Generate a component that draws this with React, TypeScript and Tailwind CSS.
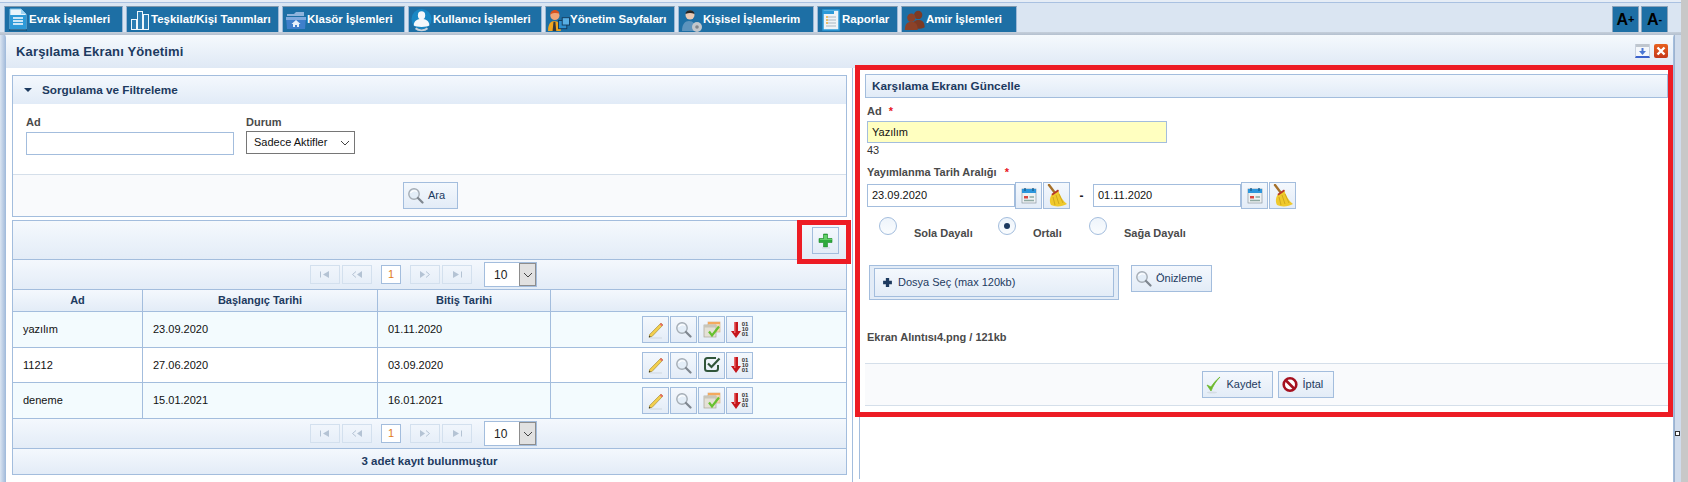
import type { ReactNode } from "react";

const font = { fontFamily: '"Liberation Sans", Arial, sans-serif' };

/* ---------- small drawn icons ---------- */

const EvrakIcon = () => (
  <svg width="22" height="24" viewBox="0 0 22 24">
    <path d="M3 1h11l5 5v16H3z" fill="#e8f4fb" stroke="#7fc4ea" />
    <path d="M14 1v5h5z" fill="#9ed4f2" />
    <rect x="3" y="7" width="16" height="14" fill="#2d9ad8" />
    <path d="M6 10h10M6 13h10M6 16h10" stroke="#fff" strokeWidth="1.6" />
    <path d="M2 22h18" stroke="#0f4f78" strokeWidth="1.5" />
  </svg>
);

const BarsIcon = () => (
  <svg width="22" height="24" viewBox="0 0 22 24">
    <g fill="#2b7db3" stroke="#eef6fb" strokeWidth="1">
      <rect x="2.500" y="11.500" width="5" height="10" />
      <rect x="8.500" y="3.500" width="5" height="18" />
      <rect x="14.500" y="6.500" width="5" height="15" />
    </g>
  </svg>
);

const FolderIcon = () => (
  <svg width="22" height="24" viewBox="0 0 22 24">
    <path d="M2 6h7l2-2h8v4H2z" fill="#8fb4dc" />
    <path d="M1 9h20l-1 12H2z" fill="#3f7fcb" />
    <path d="M1 9h20v3H1z" fill="#7fa9dd" />
    <path d="M11 12l-4.500 4h1.500v3h2v-2h2v2h2v-3h1.500z" fill="#e8f1fb" />
  </svg>
);

const UserIcon = () => (
  <svg width="24" height="24" viewBox="0 0 24 24">
    <circle cx="11.500" cy="11" r="11" fill="#1a87c4" />
    <ellipse cx="11.500" cy="7" rx="4" ry="4.500" fill="#f5f8fb" />
    <path d="M3 18c0-5 4-7 8.500-7S20 13 20 18c-2 2-15 2-17 0z" fill="#f5f8fb" />
    <path d="M5 21c3 3 10 3 13 0" stroke="#c9d3dc" strokeWidth="2" fill="none" />
  </svg>
);

const ManagerIcon = () => (
  <svg width="24" height="24" viewBox="0 0 24 24">
    <path d="M0 24c0-8 3-11 7-11s7 3 7 11z" fill="#f0a51e" />
    <path d="M6 14h2l1 10H5z" fill="#33373d" />
    <circle cx="7.500" cy="7" r="5" fill="#f2a477" />
    <path d="M2.500 6c0-6 9-7 10-1-3-1-7-1-10 1z" fill="#d9521f" />
    <rect x="11.500" y="12.500" width="9" height="9" fill="#2f8fce" stroke="#12385a" />
    <rect x="15.500" y="9.500" width="8" height="8" fill="#58aee3" stroke="#12385a" />
  </svg>
);

const PersonGearIcon = () => (
  <svg width="22" height="24" viewBox="0 0 22 24">
    <path d="M1 23c0-7 3-10 7-10s7 3 7 10z" fill="#5c93bd" />
    <circle cx="9" cy="7" r="4.500" fill="#e9c9b4" />
    <path d="M4.500 6c0-5 9-5 9 0-3-1.500-6-1.500-9 0z" fill="#262626" />
    <circle cx="16" cy="19" r="5" fill="#c2c7cc" />
    <circle cx="16" cy="19" r="1.800" fill="#80868c" />
  </svg>
);

const ReportIcon = () => (
  <svg width="22" height="24" viewBox="0 0 22 24">
    <rect x="3" y="2" width="16" height="20" fill="#eef3f7" stroke="#2b9ad9" strokeWidth="1.500" />
    <path d="M3 3h11v3H3z" fill="#2b9ad9" />
    <path d="M6 9h10M6 12h10M6 15h10M6 18h10" stroke="#a9b7c2" />
    <path d="M6 9h2M6 12h2M6 15h2" stroke="#f2b441" strokeWidth="1.500" />
  </svg>
);

const PeopleIcon = () => (
  <svg width="24" height="24" viewBox="0 0 24 24" fill="#7c3a24">
    <circle cx="15.500" cy="6.500" r="4.500" />
    <path d="M9 21c0-7 2.500-9 6.500-9s7 2 7 8c-3 2-10 2-13.500 1z" />
    <circle cx="8" cy="9.500" r="4.500" fill="#8c4229" />
    <path d="M1 23c0-7 3-9 7-9s7 2 7 9z" fill="#8c4229" />
  </svg>
);

const Magnifier = () => (
  <svg width="17" height="17" viewBox="0 0 17 17">
    <circle cx="7" cy="7" r="5.200" fill="#e4eef8" stroke="#a5adb5" strokeWidth="1.400" />
    <path d="M3.500 6c1-2 4-3 6.500-1.500" stroke="#fff" strokeWidth="1.200" fill="none" />
    <path d="M11 11l4.500 4.500" stroke="#7f8790" strokeWidth="2.200" strokeLinecap="round" />
  </svg>
);

const Pencil = () => (
  <svg width="18" height="18" viewBox="0 0 18 18">
    <path d="M14 2l2 2L5 15.500l-3 .8.800-3z" fill="#f3cf4d" stroke="#9a8330" strokeWidth=".6" />
    <path d="M14 2l2 2-1.300 1.300-2-2z" fill="#e9686a" />
    <path d="M2 16.300l.4-1.700 1.300 1.300z" fill="#222" />
    <path d="M3 17h12" stroke="#cfd7df" strokeWidth="1" />
  </svg>
);

const ApproveCards = () => (
  <svg width="18" height="18" viewBox="0 0 18 18">
    <rect x="5" y="1" width="12" height="10" fill="#f3d9b8" stroke="#d7b68d" strokeWidth=".7" />
    <rect x="5" y="1" width="12" height="2" fill="#f4a95e" />
    <rect x="1" y="4" width="12" height="12" fill="#e4e1d6" stroke="#a8a597" strokeWidth=".7" />
    <rect x="1" y="4" width="12" height="2.500" fill="#c9c6b9" />
    <path d="M6 10.500l3 4 7-9" fill="none" stroke="#66c12f" strokeWidth="2.200" />
  </svg>
);

const ApprovedBox = () => (
  <svg width="18" height="18" viewBox="0 0 18 18">
    <path d="M13 2H4.500Q2 2 2 4.500v8Q2 15 4.500 15h8q2.500 0 2.500-2.500V9" fill="none" stroke="#30553a" strokeWidth="2" />
    <path d="M5 7.500l3.500 3.500L16.500 2.500" fill="none" stroke="#30553a" strokeWidth="2.200" />
  </svg>
);

const BinaryDown = () => (
  <span className="flex items-center">
    <svg width="10" height="16" viewBox="0 0 10 16">
      <path d="M3 0h4v9h3l-5 7-5-7h3z" fill="#c5161c" />
      <path d="M3 0h1.500v11H3z" fill="#e9686a" />
    </svg>
    <span className="ml-[1px] flex flex-col text-[6px] font-bold leading-[5px] text-[#333]">
      <span>01</span>
      <span>10</span>
      <span>01</span>
    </span>
  </span>
);

const Calendar = () => (
  <svg width="16" height="17" viewBox="0 0 16 17">
    <rect x="1" y="2" width="14" height="14" fill="#eef2f3" stroke="#8c99a3" strokeWidth=".7" />
    <rect x="1" y="2" width="14" height="4" fill="#2d96dc" />
    <path d="M4 1v3M12 1v3" stroke="#1c5f8e" strokeWidth="1.400" />
    <rect x="3" y="9" width="4" height="2.500" fill="#d8453f" />
    <path d="M8.500 10h4.500M3 13.500h10" stroke="#8fa9a2" strokeWidth="1.600" />
  </svg>
);

const Broom = () => (
  <svg width="22" height="24" viewBox="0 0 22 24">
    <path d="M3 1l6 8" stroke="#a5702a" strokeWidth="2.400" strokeLinecap="round" />
    <path d="M6 10l6-4c2 6 5 11 9 14-5 3-12 3-16 1-2-4-1-8 1-11z" fill="#efc92c" />
    <path d="M10 11l3 9M7 13l2 8M13 10l4 9" stroke="#c99f1a" strokeWidth=".8" />
    <path d="M5.500 10l6.500-4.500 1 1.500-6.600 4.500z" fill="#b5352a" />
  </svg>
);

const Check = () => (
  <svg width="16" height="18" viewBox="0 0 16 18">
    <path d="M1 9l4 6c2-5 5-10 9-14-4 3-7 7-9 10z" fill="#6cb92c" stroke="#6cb92c" strokeWidth=".8" />
    <ellipse cx="6" cy="16.500" rx="5" ry="1" fill="#d5dde5" />
  </svg>
);

const NoSign = () => (
  <svg width="16" height="17" viewBox="0 0 16 17">
    <circle cx="8" cy="8.500" r="6.300" fill="#fff" stroke="#a5101f" strokeWidth="2.600" />
    <path d="M3.500 4l9 9" stroke="#a5101f" strokeWidth="2.600" />
  </svg>
);

const GreenPlus = () => (
  <svg width="16" height="16" viewBox="0 0 16 16">
    <path d="M5.500 1h4v4.500H14v4H9.500V14h-4V9.500H1v-4h4.500z" fill="#2eaa3c" stroke="#1f8a2c" strokeWidth=".6" />
    <path d="M6 2h3v4H6zM2 6h12v1H2z" fill="#62d06a" />
    <path d="M4 15h8" stroke="#cdd5dd" strokeWidth="1" />
  </svg>
);

const PagerGlyph = ({ kind }: { kind: "first" | "prev" | "next" | "last" }) => (
  <svg width="12" height="7" viewBox="0 0 12 7" fill="#b4c3d4">
    {kind === "first" && (
      <>
        <rect x="1" y="0.500" width="1" height="6" />
        <path d="M10 0v7L4 3.500z" />
      </>
    )}
    {kind === "prev" && (
      <>
        <path d="M11 0v7L6 3.500z" />
        <path d="M5 0.500L1.500 3.500 5 6.500" fill="none" stroke="#b4c3d4" />
      </>
    )}
    {kind === "next" && (
      <>
        <path d="M1 0v7l5-3.500z" />
        <path d="M7 0.500l3.500 3L7 6.500" fill="none" stroke="#b4c3d4" />
      </>
    )}
    {kind === "last" && (
      <>
        <path d="M2 0v7l6-3.500z" />
        <rect x="10" y="0.500" width="1" height="6" />
      </>
    )}
  </svg>
);

const Chevron = () => (
  <svg width="10" height="6" viewBox="0 0 10 6" fill="none" stroke="#444" strokeWidth="1">
    <path d="M1 1l4 4 4-4" />
  </svg>
);

/* ---------- data ---------- */

const menu: { label: string; w: string; icon: ReactNode }[] = [
  { label: "Evrak İşlemleri", w: "w-[119px]", icon: <EvrakIcon /> },
  { label: "Teşkilat/Kişi Tanımları", w: "w-[153px]", icon: <BarsIcon /> },
  { label: "Klasör İşlemleri", w: "w-[123px]", icon: <FolderIcon /> },
  { label: "Kullanıcı İşlemleri", w: "w-[134px]", icon: <UserIcon /> },
  { label: "Yönetim Sayfaları", w: "w-[130px]", icon: <ManagerIcon /> },
  { label: "Kişisel İşlemlerim", w: "w-[136px]", icon: <PersonGearIcon /> },
  { label: "Raporlar", w: "w-[81px]", icon: <ReportIcon /> },
  { label: "Amir İşlemleri", w: "w-[116px]", icon: <PeopleIcon /> },
];

const rows = [
  { ad: "yazılım", start: "23.09.2020", end: "01.11.2020", bg: "bg-[#f3fbfe]", h: "h-[36px]", approved: false },
  { ad: "11212", start: "27.06.2020", end: "03.09.2020", bg: "bg-white", h: "h-[35px]", approved: true },
  { ad: "deneme", start: "15.01.2021", end: "16.01.2021", bg: "bg-[#f3fbfe]", h: "h-[36px]", approved: false },
];

/* ---------- pieces ---------- */

const IconButton = ({ children }: { children: ReactNode }) => (
  <button className="flex h-[27px] w-[27px] items-center justify-center border border-[#a3bddd] bg-gradient-to-b from-[#f4f8fd] to-[#e3ecf7]">
    {children}
  </button>
);

const TextButton = ({ w, icon, label }: { w: string; icon: ReactNode; label: string }) => (
  <button className={`flex h-[27px] ${w} items-center gap-[4px] border border-[#a3bddd] bg-gradient-to-b from-[#f4f8fd] to-[#e3ecf7] pl-[3px] text-[11px] text-[#1d3a5f]`}>
    <span className="flex w-[17px] shrink-0 justify-center">{icon}</span>
    {label}
  </button>
);

const PagerButton = ({ kind }: { kind: "first" | "prev" | "next" | "last" }) => (
  <span className="flex h-[19px] w-[30px] items-center justify-center border border-[#d3e0ee]">
    <PagerGlyph kind={kind} />
  </span>
);

const Pager = () => (
  <div className="flex h-[30px] items-center border-b border-[#a3bddd] bg-gradient-to-b from-[#f4f8fd] to-[#e3ecf7] pl-[297px]">
    <PagerButton kind="first" />
    <span className="ml-[2px]">
      <PagerButton kind="prev" />
    </span>
    <span className="ml-[9px] flex h-[19px] w-[20px] items-center justify-center border border-[#a3bddd] bg-white text-[11px] text-[#e07b1a]">
      1
    </span>
    <span className="ml-[9px]">
      <PagerButton kind="next" />
    </span>
    <span className="ml-[2px]">
      <PagerButton kind="last" />
    </span>
    <span className="ml-[12px] flex h-[25px] w-[53px] items-center border border-[#a3bddd] bg-white">
      <span className="flex-1 pl-[9px] text-[12px] text-[#222]">10</span>
      <span className="flex h-[23px] w-[17px] items-center justify-center border border-[#8d8d8d] bg-[#e1e1e1]">
        <Chevron />
      </span>
    </span>
  </div>
);

const DateField = ({ value }: { value: string }) => (
  <>
    <span className="flex h-[23px] w-[148px] items-center border border-[#a3bddd] bg-white pl-[4px] text-[11px] text-[#111]">
      {value}
    </span>
    <IconButton>
      <Calendar />
    </IconButton>
    <span className="ml-[1px]">
      <IconButton>
        <Broom />
      </IconButton>
    </span>
  </>
);

const Radio = ({ label, checked, w }: { label: string; checked: boolean; w: string }) => (
  <div className={`flex ${w} items-start gap-[17px]`}>
    <span className="flex h-[18px] w-[18px] items-center justify-center rounded-full border border-[#a3bddd] bg-gradient-to-b from-[#eef4fb] to-[#fafcfe]">
      {checked && <span className="h-[6px] w-[6px] rounded-full bg-[#1d3a5f]" />}
    </span>
    <span className="mt-[9px] text-[11px] font-bold leading-[14px] text-[#4a4a4a]">{label}</span>
  </div>
);

const App = () => {
  return (
    <div style={font} className="flex h-[482px] w-[1688px] overflow-hidden bg-[#dae5f2]">
      <div className="w-[1681px] shrink-0">
        {/* TOP MENU */}
        <div className="h-[3px] border-b border-[#a9c1e1] bg-[#e6edf6]" />
        <div className="flex h-[29px] items-end justify-between pl-[4px] pr-[13px]">
          <div className="flex gap-[3px]">
            {menu.map((m) => (
              <a
                key={m.label}
                className={`flex h-[26px] ${m.w} items-center border border-b-0 border-[#9db8d6] border-t-[#7e97ad] bg-[#1d6fa5] pl-[2px] text-[11.5px] font-bold text-white`}
              >
                <span className="flex w-[22px] shrink-0">{m.icon}</span>
                <span className="whitespace-nowrap">{m.label}</span>
              </a>
            ))}
          </div>
          <div className="flex gap-[2px]">
            <span className="flex h-[26px] w-[27px] items-center justify-center border border-b-0 border-[#8ba3bb] bg-[#1d6fa5] text-[16px] font-bold text-black">
              A<span className="text-[11px]">+</span>
            </span>
            <span className="flex h-[26px] w-[27px] items-center justify-center border border-b-0 border-[#8ba3bb] bg-[#1d6fa5] text-[16px] font-bold text-black">
              A<span className="text-[11px]">-</span>
            </span>
          </div>
        </div>
        <div className="h-[3px] bg-gradient-to-b from-[#c5cfdb] to-[#b4c0cf]" />

        <div className="flex">
          {/* LEFT EDGE */}
          <div className="h-[447px] w-[5px] shrink-0 bg-gradient-to-r from-[#dae5f2] to-[#a9bfdc]" />

          {/* WINDOW */}
          <div className="h-[447px] w-[1669px] shrink-0 rounded-t-[3px] border-x border-[#a3bddd] bg-white">
            <div className="flex h-[33px] items-center justify-between bg-gradient-to-b from-[#f5f9fd] to-[#dfe9f5] pl-[10px] pr-[5px]">
              <h1 className="text-[13px] font-bold tracking-[0.15px] text-[#1d3a5f]">Karşılama Ekranı Yönetimi</h1>
              <div className="-mt-[2px] flex gap-[4px]">
                <span className="flex h-[14px] w-[15px] flex-col border-x border-b-2 border-x-[#c9d2de] border-b-[#3b62cc]">
                  <span className="h-[3px] bg-[#bfc6ce]" />
                  <span className="flex flex-1 items-center justify-center bg-[#f4f7fb]">
                    <svg width="7" height="7" viewBox="0 0 7 7">
                      <path d="M2.500 0h2v3H7L3.500 7 0 3h2.500z" fill="#4a77d4" />
                    </svg>
                  </span>
                </span>
                <span className="flex h-[14px] w-[14px] items-center justify-center rounded-[2px] bg-gradient-to-b from-[#e8611f] to-[#c5371a]">
                  <svg width="10" height="10" viewBox="0 0 10 10">
                    <path d="M1.500 1.500l7 7M8.500 1.500l-7 7" stroke="#fff" strokeWidth="2.400" />
                  </svg>
                </span>
              </div>
            </div>

            <div className="flex h-[414px]">
              {/* LEFT COLUMN */}
              <div className="w-[846px] shrink-0 pl-[6px] pt-[7px]">
                <section className="w-[835px] border border-[#a3bddd]">
                  <div className="flex h-[28px] items-center gap-[10px] bg-gradient-to-b from-[#f4f8fd] to-[#e1ebf7] pl-[11px]">
                    <span className="h-0 w-0 border-x-[4px] border-t-[4px] border-x-transparent border-t-[#1d3a5f]" />
                    <span className="text-[11.75px] font-bold text-[#1d3a5f]">Sorgulama ve Filtreleme</span>
                  </div>
                  <div className="flex h-[70px] gap-[12px] pl-[13px] pt-[10px]">
                    <div>
                      <div className="text-[11px] font-bold leading-[17px] text-[#4a4a4a]">Ad</div>
                      <input className="h-[23px] w-[208px] border border-[#a3bddd] bg-white" />
                    </div>
                    <div>
                      <div className="text-[11px] font-bold leading-[17px] text-[#4a4a4a]">Durum</div>
                      <div className="flex h-[23px] w-[109px] items-center justify-between border border-[#767676] bg-white pl-[7px] pr-[4px] text-[11px] text-[#111]">
                        Sadece Aktifler
                        <Chevron />
                      </div>
                    </div>
                  </div>
                  <div className="flex h-[42px] justify-center border-t border-[#d5dfea] bg-[#f9fafc] pl-[2px] pt-[7px]">
                    <TextButton w="w-[55px]" icon={<Magnifier />} label="Ara" />
                  </div>
                </section>

                <section className="mt-[3px] w-[835px] border border-[#a3bddd]">
                  {/* TOOLBAR */}
                  <div className="relative flex h-[39px] items-start justify-end border-b border-[#a3bddd] bg-gradient-to-b from-[#f5f9fd] to-[#e3ecf7] pr-[7px] pt-[6px]">
                    <IconButton>
                      <GreenPlus />
                    </IconButton>
                    {/* annotation frame */}
                    <span className="absolute -right-[5px] -top-[1px] h-[44px] w-[54px] border-[5px] border-[#ed1c24]" />
                  </div>

                  <Pager />

                  {/* TABLE */}
                  <div className="grid h-[22px] grid-cols-[129px_235px_173px_1fr] border-b border-[#a3bddd] bg-gradient-to-b from-[#f4f8fd] to-[#e3ecf7] text-center text-[11px] font-bold leading-[21px] text-[#1d3a5f]">
                    <div>Ad</div>
                    <div className="border-l border-[#a3bddd]">Başlangıç Tarihi</div>
                    <div className="border-l border-[#a3bddd]">Bitiş Tarihi</div>
                    <div className="border-l border-[#a3bddd]" />
                  </div>
                  {rows.map((r) => (
                    <div
                      key={r.ad}
                      className={`grid ${r.h} grid-cols-[129px_235px_173px_1fr] border-b border-[#a3bddd] ${r.bg} text-[11px] text-[#111]`}
                    >
                      <div className="flex items-center pl-[10px]">{r.ad}</div>
                      <div className="flex items-center border-l border-[#a3bddd] pl-[10px]">{r.start}</div>
                      <div className="flex items-center border-l border-[#a3bddd] pl-[10px]">{r.end}</div>
                      <div className="flex items-center gap-[1px] border-l border-[#a3bddd] pl-[91px]">
                        <IconButton>
                          <Pencil />
                        </IconButton>
                        <IconButton>
                          <Magnifier />
                        </IconButton>
                        <IconButton>{r.approved ? <ApprovedBox /> : <ApproveCards />}</IconButton>
                        <IconButton>
                          <BinaryDown />
                        </IconButton>
                      </div>
                    </div>
                  ))}

                  <Pager />

                  <div className="flex h-[25px] items-center justify-center bg-gradient-to-b from-[#f4f8fd] to-[#e3ecf7] text-[11.5px] font-bold text-[#1d3a5f]">
                    3 adet kayıt bulunmuştur
                  </div>
                </section>
              </div>

              {/* RIGHT COLUMN */}
              <div className="flex-1 border-l border-[#a3bddd] pl-[6px]">
                <div className="h-full border-l border-[#a3bddd]">
                  <div className="relative -ml-[5px] -mt-[3px] h-[352px] w-[818px] border-[5px] border-[#ed1c24] bg-white pl-[5px] pt-[4px]">
                    <div className="flex h-[24px] items-center border border-[#a3bddd] bg-gradient-to-b from-[#f4f8fd] to-[#e1ebf7] pl-[6px] text-[11.75px] font-bold text-[#1d3a5f]">
                      Karşılama Ekranı Güncelle
                    </div>

                    <div className="pl-[2px]">
                      <div className="mt-[6px] h-[14px] text-[11px] font-bold leading-[14px] text-[#4a4a4a]">
                        Ad <span className="ml-[4px] text-[#e8141c]">*</span>
                      </div>
                      <div className="mt-[3px] flex h-[22px] w-[300px] items-center border border-[#a3bddd] bg-[#ffffc0] pl-[4px] text-[11px] text-[#111]">
                        Yazılım
                      </div>
                      <div className="mt-[1px] h-[12px] text-[11px] leading-[12px] text-[#333]">43</div>
                      <div className="mt-[9px] h-[14px] text-[11px] font-bold leading-[14px] text-[#4a4a4a]">
                        Yayımlanma Tarih Aralığı <span className="ml-[5px] text-[#e8141c]">*</span>
                      </div>
                      <div className="mt-[3px] flex h-[27px] items-center">
                        <DateField value="23.09.2020" />
                        <span className="w-[23px] text-center text-[12px] font-bold text-[#222]">-</span>
                        <DateField value="01.11.2020" />
                      </div>

                      <div className="ml-[12px] mt-[8px] flex h-[23px]">
                        <Radio label="Sola Dayalı" checked={false} w="w-[119px]" />
                        <Radio label="Ortalı" checked w="w-[91px]" />
                        <Radio label="Sağa Dayalı" checked={false} w="w-[120px]" />
                      </div>

                      <div className="ml-[2px] mt-[25px] flex items-start gap-[12px]">
                        <div className="h-[35px] w-[250px] border border-[#a3bddd] bg-[#e3ecf7] px-[4px] pt-[2px]">
                          <div className="flex h-[29px] items-center gap-[5px] border border-[#a3bddd] bg-gradient-to-b from-[#f4f8fd] to-[#e3ecf7] pl-[7px] text-[11px] text-[#1d3a5f]">
                            <svg width="11" height="11" viewBox="0 0 10 10">
                              <path d="M3.500 1h3v2.500H9v3H6.500V9h-3V6.500H1v-3h2.500z" fill="#1d3a5f" />
                            </svg>
                            Dosya Seç (max 120kb)
                          </div>
                        </div>
                        <TextButton w="w-[81px]" icon={<Magnifier />} label="Önizleme" />
                      </div>

                      <div className="mt-[30px] h-[14px] text-[11px] font-bold leading-[14px] text-[#4a4a4a]">
                        Ekran Alıntısı4.png / 121kb
                      </div>
                    </div>

                    <div className="mt-[19px] flex h-[43px] justify-center gap-[5px] border-y border-[#d5dfea] bg-[#f9fafc] pl-[2px] pt-[7px]">
                      <TextButton w="w-[71px]" icon={<Check />} label="Kaydet" />
                      <TextButton w="w-[56px]" icon={<NoSign />} label="İptal" />
                    </div>
                  </div>
                </div>
              </div>
            </div>
          </div>

          {/* SPLITTER */}
          <div className="h-[447px] w-[7px] shrink-0 border-l border-[#9db3cf] bg-[#d0dcec] pt-[396px]">
            <div className="h-[5px] w-[5px] border border-[#333] bg-white" />
          </div>
        </div>
      </div>

      {/* SCROLL STRIP */}
      <div className="w-[7px] shrink-0 bg-[#c8c8c8]" />
    </div>
  );
};

export default App;
